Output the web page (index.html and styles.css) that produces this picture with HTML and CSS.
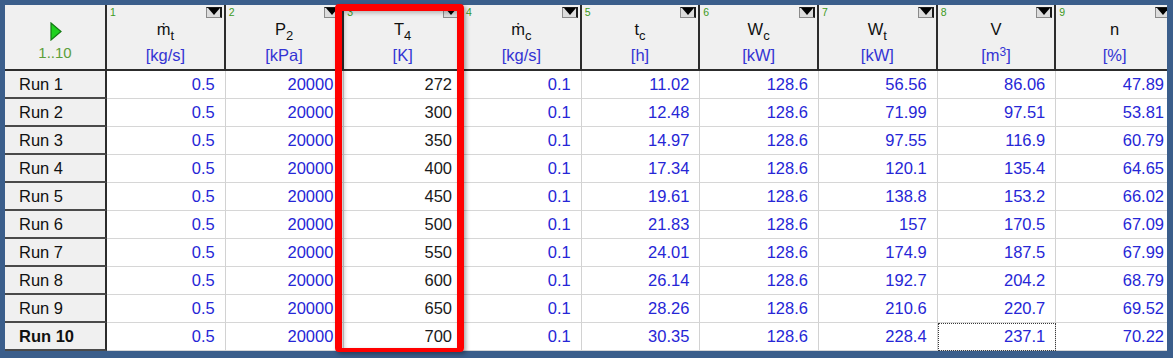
FILE: index.html
```html
<!DOCTYPE html>
<html>
<head>
    <title>Parametric Table</title>
    <link rel="stylesheet" href="styles.css">
</head>
<body>
    <div class="frame">
        <div class="sheet">
            <table class="grid">
                <colgroup>
                    <col class="col-label">
                    <col class="col-data"><col class="col-data"><col class="col-data">
                    <col class="col-data"><col class="col-data"><col class="col-data">
                    <col class="col-data"><col class="col-data"><col class="col-data">
                </colgroup>
                <thead>
                    <tr class="head-row">
                        <th class="corner">
                            <svg class="play" width="12" height="19" viewBox="0 0 12 19">
                                <polygon points="1,1 11,9.5 1,18" fill="#1fd21f" stroke="#137a13" stroke-width="1.2"/>
                            </svg>
                            <div class="range">1..10</div>
                        </th>
                        <th><span class="colnum">1</span><span class="drop"></span><div class="name">ṁ<sub>t</sub></div><div class="unit">[kg/s]</div></th>
                        <th><span class="colnum">2</span><span class="drop"></span><div class="name">P<sub>2</sub></div><div class="unit">[kPa]</div></th>
                        <th class="picked"><span class="colnum">3</span><span class="drop"></span><div class="name">T<sub>4</sub></div><div class="unit">[K]</div></th>
                        <th><span class="colnum">4</span><span class="drop"></span><div class="name">ṁ<sub>c</sub></div><div class="unit">[kg/s]</div></th>
                        <th><span class="colnum">5</span><span class="drop"></span><div class="name">t<sub>c</sub></div><div class="unit">[h]</div></th>
                        <th><span class="colnum">6</span><span class="drop"></span><div class="name">W<sub>c</sub></div><div class="unit">[kW]</div></th>
                        <th><span class="colnum">7</span><span class="drop"></span><div class="name">W<sub>t</sub></div><div class="unit">[kW]</div></th>
                        <th><span class="colnum">8</span><span class="drop"></span><div class="name">V</div><div class="unit">[m<span class="sup">3</span>]</div></th>
                        <th><span class="colnum">9</span><span class="drop"></span><div class="name">n</div><div class="unit">[%]</div></th>
                    </tr>
                </thead>
                <tbody>
                    <tr><td class="run">Run 1</td><td>0.5</td><td>20000</td><td class="fixed">272</td><td>0.1</td><td>11.02</td><td>128.6</td><td>56.56</td><td>86.06</td><td>47.89</td></tr>
                    <tr><td class="run">Run 2</td><td>0.5</td><td>20000</td><td class="fixed">300</td><td>0.1</td><td>12.48</td><td>128.6</td><td>71.99</td><td>97.51</td><td>53.81</td></tr>
                    <tr><td class="run">Run 3</td><td>0.5</td><td>20000</td><td class="fixed">350</td><td>0.1</td><td>14.97</td><td>128.6</td><td>97.55</td><td>116.9</td><td>60.79</td></tr>
                    <tr><td class="run">Run 4</td><td>0.5</td><td>20000</td><td class="fixed">400</td><td>0.1</td><td>17.34</td><td>128.6</td><td>120.1</td><td>135.4</td><td>64.65</td></tr>
                    <tr><td class="run">Run 5</td><td>0.5</td><td>20000</td><td class="fixed">450</td><td>0.1</td><td>19.61</td><td>128.6</td><td>138.8</td><td>153.2</td><td>66.02</td></tr>
                    <tr><td class="run">Run 6</td><td>0.5</td><td>20000</td><td class="fixed">500</td><td>0.1</td><td>21.83</td><td>128.6</td><td>157</td><td>170.5</td><td>67.09</td></tr>
                    <tr><td class="run">Run 7</td><td>0.5</td><td>20000</td><td class="fixed">550</td><td>0.1</td><td>24.01</td><td>128.6</td><td>174.9</td><td>187.5</td><td>67.99</td></tr>
                    <tr><td class="run">Run 8</td><td>0.5</td><td>20000</td><td class="fixed">600</td><td>0.1</td><td>26.14</td><td>128.6</td><td>192.7</td><td>204.2</td><td>68.79</td></tr>
                    <tr><td class="run">Run 9</td><td>0.5</td><td>20000</td><td class="fixed">650</td><td>0.1</td><td>28.26</td><td>128.6</td><td>210.6</td><td>220.7</td><td>69.52</td></tr>
                    <tr class="last"><td class="run current">Run 10</td><td>0.5</td><td>20000</td><td class="fixed">700</td><td>0.1</td><td>30.35</td><td>128.6</td><td>228.4</td><td class="focus">237.1</td><td>70.22</td></tr>
                </tbody>
            </table>
        </div>
        <div class="highlight"></div>
    </div>
</body>
</html>
```

FILE: styles.css
```css
body {
    margin: 0;
    background-color: #3b5e8b;
    font-family: 'Liberation Sans', Arial, sans-serif;
}

.frame {
    position: relative;
    width: 1173px;
    height: 358px;
    padding: 5px 6px 7px 5px;
    box-sizing: border-box;
}

.sheet {
    width: 1162px;
    height: 346px;
    overflow: hidden;
    background-color: #ffffff;
}

.grid {
    table-layout: fixed;
    width: 1170px;
    border-collapse: separate;
    border-spacing: 0;
    font-size: 16.5px;
}

.col-label {
    width: 102px;
}

.col-data {
    width: 118.6px;
}

/* header */

.head-row {
    height: 66px;
}

.grid th {
    position: relative;
    padding: 14px 0 0 0;
    vertical-align: top;
    background-color: #f0f0f0;
    border-right: 2px solid #2c2c2c;
    border-bottom: 2px solid #2c2c2c;
    font-weight: normal;
    text-align: center;
}

.grid th.corner {
    padding-top: 17px;
}

.play {
    display: block;
    margin: 0 auto;
    position: relative;
    left: 1px;
}

.range {
    margin-top: 3px;
    color: #5c9e3a;
    font-size: 15px;
    line-height: 18px;
}

.colnum {
    position: absolute;
    left: 3px;
    top: 1px;
    color: #3d9a22;
    font-size: 10.5px;
    line-height: 12px;
}

.drop {
    position: absolute;
    right: 2px;
    top: 2px;
    width: 16px;
    height: 11px;
    box-sizing: border-box;
    background-color: #dcdcdc;
    border-left: 1px solid #8a8a8a;
    border-bottom: 1px solid #8a8a8a;
    border-top: 1px solid #1a1a1a;
    border-right: 2px solid #1a1a1a;
}

.drop::after {
    content: '';
    position: absolute;
    left: 1px;
    top: 0;
    border-left: 6px solid transparent;
    border-right: 6px solid transparent;
    border-top: 7px solid #000000;
}

.name {
    color: #111111;
    line-height: 20px;
}

.name sub {
    font-size: 13px;
    line-height: 0;
    vertical-align: -5px;
}

.unit {
    margin-top: 6px;
    color: #3434d4;
    line-height: 20px;
}

.unit .sup {
    font-size: 12px;
    vertical-align: 5px;
    line-height: 0;
}

/* body rows */

.grid tbody tr {
    height: 28px;
}

.grid td {
    padding: 0 10px 0 0;
    text-align: right;
    color: #2626d6;
    border-right: 1px solid #d2d2d2;
    border-bottom: 1px solid #d6d6d6;
    white-space: nowrap;
}

.grid td.run {
    padding: 0 0 0 14px;
    text-align: left;
    color: #111111;
    background-color: #f0f0f0;
    border-right: 2px solid #2c2c2c;
    border-bottom: 2px solid #4a4a4a;
}

.grid td.current {
    font-weight: bold;
}

.grid td.fixed {
    color: #1a1a1a;
}

.grid td.focus {
    outline: 1px dotted #3a3a3a;
    outline-offset: -1px;
}

/* red box drawn over the T4 column */

.highlight {
    position: absolute;
    left: 335px;
    top: 4px;
    width: 129px;
    height: 348px;
    box-sizing: border-box;
    border: 7px solid #ff0000;
    border-bottom-width: 4px;
    border-radius: 4px;
    box-shadow: 2px 2px 4px rgba(0, 0, 0, 0.35), inset 2px 2px 4px rgba(0, 0, 0, 0.25);
}
```
